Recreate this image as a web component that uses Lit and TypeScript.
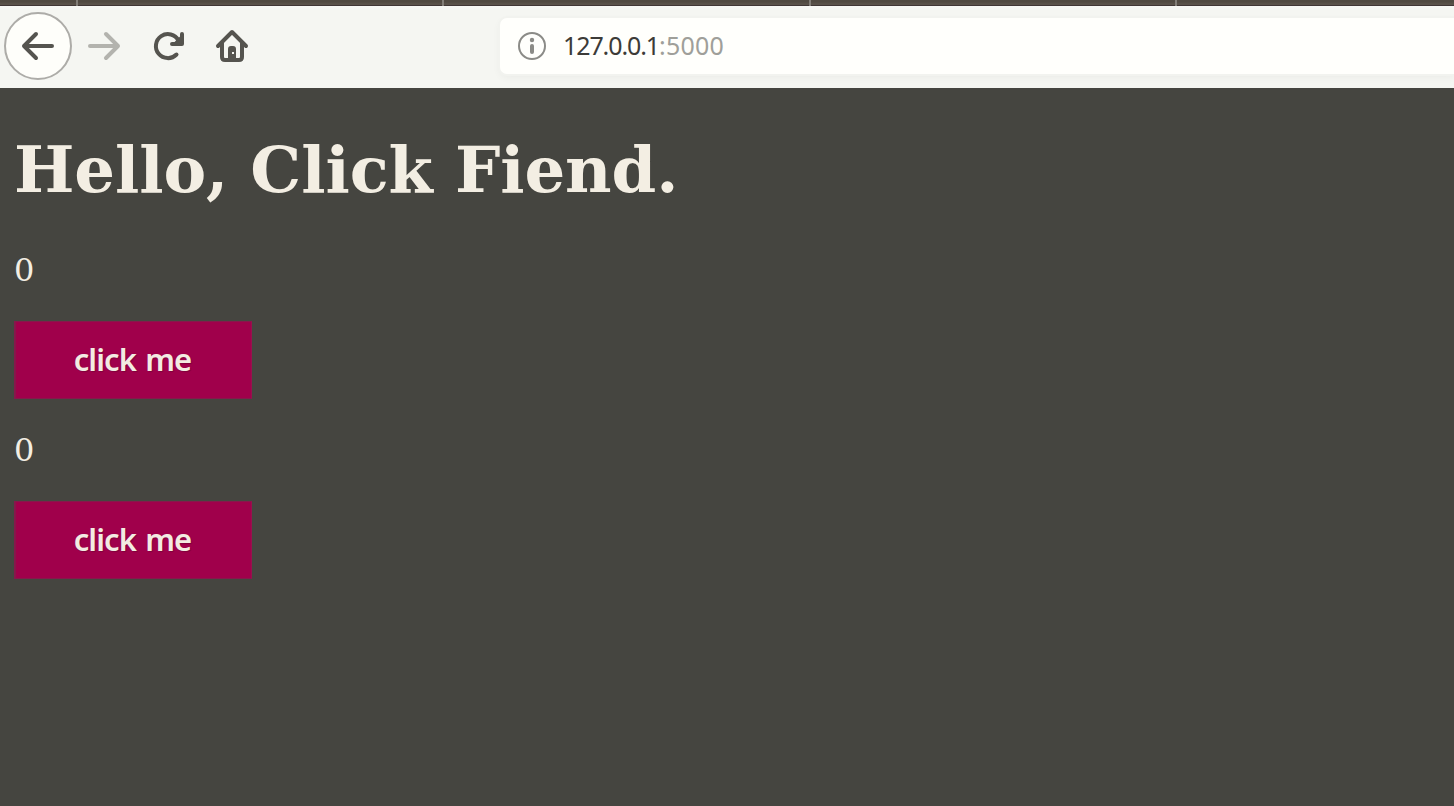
import { LitElement, html, css } from "lit";
import { customElement, state } from "lit/decorators.js";

@customElement("browser-bar")
class BrowserBar extends LitElement {
  static styles = css`
    :host { display: block; font-family: "Noto Sans", sans-serif; }
    .tabs {
      box-sizing: border-box; height: 6px; padding-left: 76px;
      display: flex; gap: 364.3px;
      background: linear-gradient(#504941 0 2px, #574f47 3px, #5b534b 5px, #403635 5px);
    }
    .sep { flex: none; width: 2px; height: 6px; background: #827d77; }
    .bar {
      box-sizing: border-box; height: 82px; display: flex; align-items: flex-start;
      background: linear-gradient(#f8f8f5, #f5f6f2 4px, #f5f6f2);
      overflow: hidden;
    }
    .icons { flex: none; display: block; width: 260px; height: 82px; }
    .address {
      box-sizing: border-box; flex: 1; height: 56px; margin: 12px 0 0 240px;
      padding-left: 18px; display: flex; align-items: center;
      background: #fffffc; border-radius: 7px 0 0 7px;
      box-shadow: 0 0 0 2px #f2f3ef, 0 3px 8px #0000000d;
    }
    .info { flex: none; width: 28px; height: 28px; margin-right: 17px; }
    .url { display: flex; padding-bottom: 2px; font-size: 25px; line-height: 34px; color: #3c3b38; white-space: pre; }
    .host { width: 96px; letter-spacing: -1.1px; }
    .port { color: #9f9f9a; letter-spacing: 0.2px; }
  `;
  render() {
    return html`
      <div class="tabs">${[0, 1, 2, 3].map(() => html`<span class="sep"></span>`)}</div>
      <div class="bar">
        <svg class="icons" viewBox="0 6 260 82" fill="none" stroke="#55544f" stroke-width="4" stroke-linecap="round" stroke-linejoin="round">
          <circle cx="38" cy="46" r="33" fill="#fefefa" stroke="#adaca8" stroke-width="2" />
          <path d="M52 46H24M36 34L24 46L36 58" />
          <path d="M90 46H118M106 34L118 46L106 58" stroke="#b3b3ae" />
          <path d="M176.5 54.5A12 12 0 1 1 178.5 40.5M182 34V44H172" />
          <path d="M175 43L181 37V43Z" fill="#55544f" stroke-width="2" />
          <path d="M218 46L232 32L246 46M222 43V57Q222 60 225 60H239Q242 60 242 57V43" />
          <path fill="#55544f" stroke="none" fill-rule="evenodd" d="M228 60V49Q228 46 231 46H233Q236 46 236 49V60ZM232 52V54H234V52Z" />
        </svg>
        <div class="address">
          <svg class="info" viewBox="0 0 28 28">
            <circle cx="14" cy="14" r="13" fill="none" stroke="#8b8b87" stroke-width="2" />
            <circle cx="14" cy="8" r="2.2" fill="#8b8b87" />
            <rect x="12" y="12" width="4" height="10" rx="2" fill="#8b8b87" />
          </svg>
          <div class="url"><span class="host">127.0.0.1</span><span class="port">:5000</span></div>
        </div>
      </div>
    `;
  }
}

@customElement("click-counter")
class ClickCounter extends LitElement {
  static styles = css`
    :host { display: block; }
    .count { margin: 0 0 32px; font: 32px/38px "DejaVu Serif", serif; }
    .button {
      box-sizing: border-box; display: block; width: 238px; height: 78px; margin: 0; padding: 0 2px 2px 0;
      border: 1px solid #86184b; border-left-width: 2px; border-right-color: #98104d;
      border-radius: 0; background: #a0004b; color: #f3ebe2;
      font: 600 31px/40px "Noto Sans", sans-serif; letter-spacing: -0.9px; word-spacing: 2px; white-space: nowrap;
      text-shadow: 1px 1px 1px #0003;
    }
  `;
  @state() count = 0;
  render() {
    return html`
      <p class="count">${this.count}</p>
      <button class="button" @click=${() => this.count++}>click me</button>
    `;
  }
}

@customElement("app-root")
class AppRoot extends LitElement {
  static styles = css`
    :host { display: block; height: 806px; overflow: hidden; background: #454540; color: #f3eee3; }
    .page { padding: 44px 14px 0; display: flow-root; }
    .title { margin: 0 0 43px; font: bold 64px/76px "DejaVu Serif", serif; letter-spacing: -0.1px; white-space: nowrap; }
    .counters { display: grid; gap: 32px; }
  `;
  render() {
    return html`
      <browser-bar></browser-bar>
      <main class="page">
        <h1 class="title">Hello, Click Fiend.</h1>
        <div class="counters">
          <click-counter></click-counter>
          <click-counter></click-counter>
        </div>
      </main>
    `;
  }
}
